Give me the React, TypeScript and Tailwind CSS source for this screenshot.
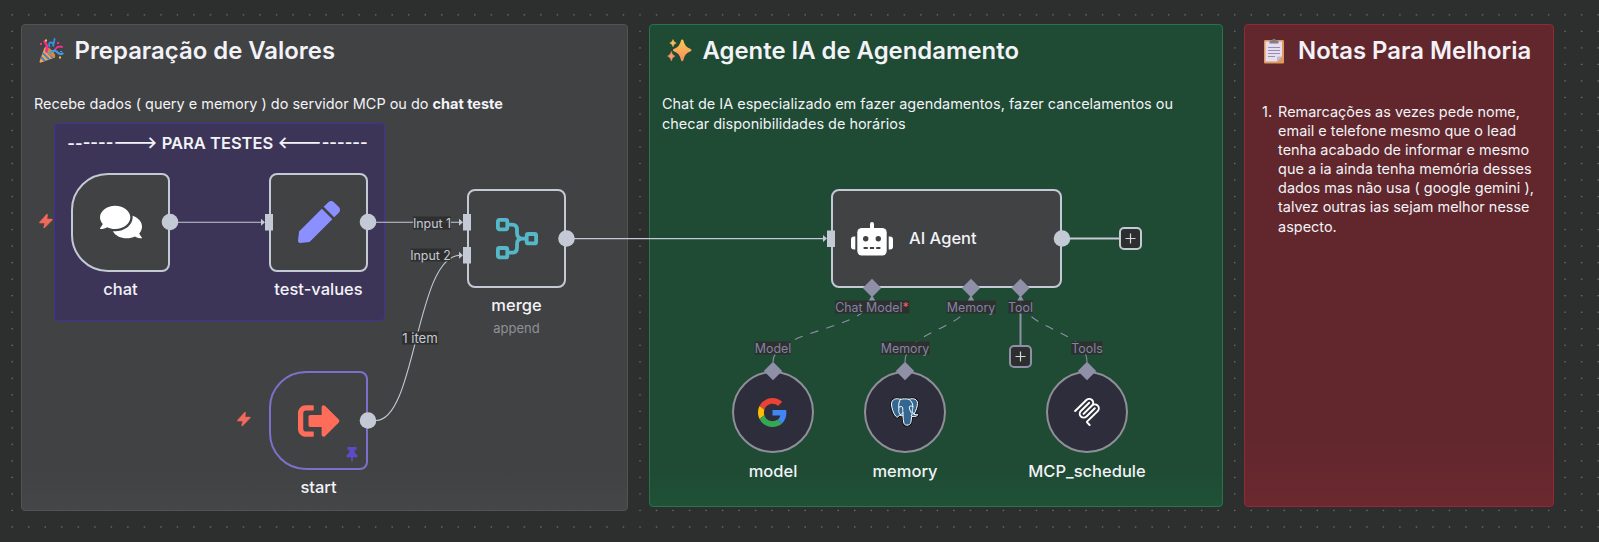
import type { ReactNode } from 'react';
import { FaComments, FaPen, FaSignOutAlt, FaThumbtack } from 'react-icons/fa';

type Tone = 'light' | 'muted';

function Label({ x, y, tone = 'light', children }: { x: number; y: number; tone?: Tone; children: ReactNode }) {
  return (
    <span
      className={`absolute -translate-x-1/2 -translate-y-1/2 whitespace-nowrap bg-[#2d2e2e]/90 text-[12.4px] leading-[13px] ${tone === 'light' ? 'text-[#c3c9d5]' : 'text-[#8683a3]'}`}
      style={{ left: x, top: y }}
    >
      {children}
    </span>
  );
}

/** A canvas node: the outlined box with its name and optional subtitle stacked underneath. */
function Node({ x, y, box, name, subtitle, children }: { x: number; y: number; box: string; name?: string; subtitle?: string; children: ReactNode }) {
  return (
    <div className="absolute flex flex-col items-center whitespace-nowrap" style={{ left: x, top: y }}>
      <div className={`flex items-center border-2 ${box}`}>{children}</div>
      {name && <span className="-mx-8 mt-[7px] text-[16.500px] leading-5 font-medium">{name}</span>}
      {subtitle && <span className="mt-[4px] text-[13px] leading-[18px] text-[#8f9196]">{subtitle}</span>}
    </div>
  );
}

function Bolt({ x, y }: { x: number; y: number }) {
  return (
    <svg className="absolute h-4 w-4" style={{ left: x, top: y }} viewBox="0 0 16 16">
      <path d="M8.7 1.2 1.5 9.2q-.5.8.4.9h4.8l-1 4.3q0 .9.8.5l7.7-7.8q.5-.8-.4-1H9l.6-4.400q0-.9-.9-.5Z" fill="#f0695b" stroke="#f0695b" strokeWidth=".5" strokeLinejoin="round" />
    </svg>
  );
}

function RobotIcon() {
  return (
    <svg className="h-[34px] w-[42px]" viewBox="0 0 42 34" fill="#fff">
      <rect x="19" y="0" width="4" height="9" rx="2" />
      <path d="M4.300 14.500v13H3a3 3 0 0 1-3-3v-7a3 3 0 0 1 3-3ZM37.700 14.500v13H39a3 3 0 0 0 3-3v-7a3 3 0 0 0-3-3Z" />
      <rect x="6.300" y="6" width="29.400" height="27.500" rx="4.500" />
      <g fill="#414244">
        <circle cx="14.700" cy="16.700" r="2.700" />
        <circle cx="27.300" cy="16.700" r="2.700" />
        <path d="M12.600 25h4.200v2h-4.200ZM18.900 25h4.200v2h-4.200ZM25.200 25h4.200v2h-4.200Z" />
      </g>
    </svg>
  );
}

function MergeIcon() {
  return (
    <svg className="h-[42px] w-[42px]" viewBox="0 0 42 42" fill="none" stroke="#54b8c9" strokeWidth="3.8">
      <rect x="1.900" y="1.900" width="9.400" height="9.400" rx="1.500" />
      <rect x="1.900" y="30" width="9.400" height="9.400" rx="1.500" />
      <rect x="30.700" y="16" width="9.400" height="9.400" rx="1.500" />
      <path d="M12.500 6.600h3.500q5 0 5 5v3.500q0 5.500 5.500 5.500h3.500M12.500 34.700h3.500q5 0 5-5v-3.500q0-5.500 5.500-5.500" />
    </svg>
  );
}

function GoogleIcon() {
  return (
    <svg className="mr-px h-[29px] w-[29px]" viewBox="0 0 48 48">
      <path fill="#EA4335" d="M24 9.5c3.54 0 6.71 1.22 9.21 3.6l6.85-6.85C35.9 2.38 30.47 0 24 0 14.62 0 6.51 5.38 2.56 13.22l7.98 6.19C12.43 13.72 17.74 9.5 24 9.5z" />
      <path fill="#4285F4" d="M46.98 24.55c0-1.57-.15-3.09-.38-4.55H24v9.02h12.94c-.58 2.96-2.26 5.48-4.78 7.18l7.73 6c4.51-4.18 7.09-10.36 7.09-17.65z" />
      <path fill="#FBBC05" d="M10.53 28.59c-.48-1.45-.76-2.99-.76-4.59s.27-3.14.76-4.59l-7.98-6.19C.92 16.46 0 20.12 0 24c0 3.88.92 7.54 2.56 10.78l7.97-6.19z" />
      <path fill="#34A853" d="M24 48c6.48 0 11.93-2.13 15.89-5.81l-7.73-6c-2.15 1.45-4.92 2.3-8.16 2.3-6.26 0-11.57-4.22-13.47-9.91l-7.98 6.19C6.51 42.62 14.62 48 24 48z" />
    </svg>
  );
}

const ELEPHANT =
  'M10.500 2.300C6 .8 1.700 2 1.500 7c0 4 2 9.500 4.200 12.200 1 1.200 2.200 1.200 3-.1l1-1.200c1 .8 2 .9 3.300.8.4 2.500.2 5.500.9 7.500.6 1.800 2.500 2.300 4.300 1.800 2-.5 2.700-1.800 2.900-4l.5-4.500c2 .3 4.500.1 6-1.300.4-.6 0-1-.8-.8-1.200.2-2.300.2-3-.1 2.200-3.300 3.600-7.800 3.700-11 0-4-4-5.500-8.500-4-2.800-.6-5.800-.6-8.500 0Z';

function ElephantIcon() {
  return (
    <svg className="h-[30px] w-[30px]" viewBox="0 0 30 30" strokeLinejoin="round" strokeLinecap="round">
      <path d={ELEPHANT} fill="#111" stroke="#111" strokeWidth="2.600" />
      <path d={ELEPHANT} fill="#336791" stroke="#fff" strokeWidth="1" />
      <path
        d="M10.500 2.300C8.800 4.500 8.500 7.500 8.800 10.500c.2 2-.4 3.500.2 5 .3 1 .8 1.800 1.600 2.300M9 10.200c1.500-1 3.500-1 3.700.6.3 2.200-.4 3.200.4 4.700-.6 1.700-2 1.500-3 2.300M13 18.700c-.1-1.200.3-2-.1-3M19 2.300c3 2 4 5 3.900 8 0 1.500-.9 3-.6 4.500.2 1 1 1.600 1.500 2.200M22.800 9.500c-1.500-.8-3.500-.7-3.500.7.2 2.300 1.400 4.800 3 6.800l-1 1.700"
        fill="none"
        stroke="#fff"
        strokeWidth="1"
      />
    </svg>
  );
}

function McpIcon() {
  return (
    <svg className="mr-px h-7 w-7" viewBox="0 0 24 24" fill="#fff">
      <path d="M15.688 2.343a2.588 2.588 0 00-3.61 0l-9.626 9.44a.863.863 0 01-1.203 0 .823.823 0 010-1.18l9.626-9.44a4.313 4.313 0 016.016 0 4.116 4.116 0 011.204 3.54 4.3 4.3 0 013.609 1.18l.05.05a4.115 4.115 0 010 5.9l-8.706 8.537a.274.274 0 000 .393l1.788 1.754a.823.823 0 010 1.18.863.863 0 01-1.203 0l-1.788-1.753a1.92 1.92 0 010-2.754l8.706-8.538a2.47 2.47 0 000-3.54l-.05-.049a2.588 2.588 0 00-3.607-.003l-7.172 7.034-.002.002-.098.097a.863.863 0 01-1.204 0 .823.823 0 010-1.18l7.273-7.133a2.47 2.47 0 00-.003-3.537z" />
      <path d="M14.485 4.703a.823.823 0 000-1.18.863.863 0 00-1.204 0l-7.119 6.982a4.115 4.115 0 000 5.9 4.314 4.314 0 006.016 0l7.12-6.982a.823.823 0 000-1.18.863.863 0 00-1.204 0l-7.119 6.982a2.588 2.588 0 01-3.61 0 2.47 2.47 0 010-3.54l7.12-6.982z" />
    </svg>
  );
}

function Plus({ x, y, className }: { x: number; y: number; className: string }) {
  return (
    <div className={`absolute flex h-[23px] w-[23px] items-center justify-center rounded-[5px] border-2 bg-[#2d2e2e] ${className}`} style={{ left: x, top: y }}>
      <svg className="h-[11px] w-[11px]" viewBox="0 0 11 11" stroke="#d6d7de" strokeWidth="1.200">
        <path d="M5.500 .5v10M.5 5.500h10" />
      </svg>
    </div>
  );
}

function PartyIcon() {
  return (
    <svg className="h-[26px] w-[26px]" viewBox="0 0 26 26" fill="none">
      <path d="M6.500 9.500 1.500 23.500q0 1.500 1.500 1L17 19.500Q16 11 6.500 9.500Z" fill="#f3a545" />
      <path d="m4.600 14.800 6.800 6.900M3 19l4 4.200M7.200 11.500l7.800 8.500" stroke="#3f7fd6" strokeWidth="1.900" />
      <ellipse cx="12" cy="14" rx="2.600" ry="7" transform="rotate(-45 12 14)" fill="#d98836" />
      <path d="M8.500 13.500Q10.500 8 6.500 3.500" stroke="#f0308c" strokeWidth="2.500" strokeLinecap="round" />
      <path d="M17 11.500q3-4 7-2.500" stroke="#f0308c" strokeWidth="2" strokeLinecap="round" />
      <path d="M12 15q4-4 7-1t5.500 1.500" stroke="#3aa0ee" strokeWidth="2.200" strokeLinecap="round" />
      <path d="M11.500 8.500q-1.500-4 1.500-4t2 4q1-3 1.500-7.500" stroke="#2f95e0" strokeWidth="1.800" strokeLinecap="round" />
      <path d="M7 1.500h2v2H7ZM21 18.500h2v2h-2Z" fill="#f8c04c" />
      <path d="M2 5h2v2H2ZM19 4h2v2h-2Z" fill="#f0308c" />
      <path d="M22 13h2v1h-2Z" fill="#3aa0ee" />
    </svg>
  );
}

function SparklesIcon() {
  return (
    <svg className="h-[26px] w-[26px]" viewBox="0 0 26 26">
      <defs>
        <linearGradient id="spark" x1="0" y1="0" x2="0" y2="1">
          <stop offset="0" stopColor="#fbc94f" />
          <stop offset="1" stopColor="#f98a5f" />
        </linearGradient>
      </defs>
      <path fill="url(#spark)" d="M16.200 1.500q.9 0 1.200 1.100 1.200 6.300 6.800 8.200 1.400.6 1.400 1.300t-1.400 1.300q-5.600 1.900-6.800 8.700-.3 1.200-1.200 1.200T15 22.100q-1.200-6.800-6.800-8.700-1.400-.6-1.400-1.300t1.400-1.300Q13.800 8.900 15 2.600q.3-1.100 1.200-1.100Z" />
      <path fill="#fbb95c" d="M7 1.500q.7 2.700 3.200 3.500Q7.700 5.800 7 8.700 6.300 5.800 3.800 5 6.300 4.200 7 1.500Z" stroke="#fbb95c" strokeWidth=".5" />
      <path fill="#fa9a6b" d="M5.300 13.500q.8 3.800 3.700 4.600-2.900.9-3.700 4.800-.8-3.900-3.700-4.800 2.900-.8 3.700-4.600Z" stroke="#fa9a6b" strokeWidth=".5" />
    </svg>
  );
}

function ClipboardIcon() {
  return (
    <svg className="h-[26px] w-[22px]" viewBox="0 0 22 26">
      <rect x="1" y="2" width="20" height="23.500" rx="1.200" fill="#dd9b60" />
      <path d="M2.500 3.500h16.500v15l-5 5H2.500Z" fill="#e6def0" />
      <path d="M14 23.500v-4q0-1 1-1h4Z" fill="#c4b5d6" />
      <path d="M6.500 5.500v-2q0-1 1-1h1.500Q9.300.8 11 .8t2 1.700h1.500q1 0 1 1v2Z" fill="#837c8b" />
      <path d="M5 9.500h12M5 12.500h12M5 15.500h12M5 18.500h7" stroke="#8f84a6" strokeWidth=".9" />
    </svg>
  );
}

const dots = Array.from({ length: 33 }, (_, r) => Array.from({ length: 97 }, (_, c) => [12.3 + c * 16.52, 14.9 + r * 16.52])).flat();

const circles = [[170, 222], [368, 222], [566.5, 238.5], [368, 420.5], [1062, 238.5]];
const squares = [[265, 214], [463, 214], [463, 247], [827, 230.5]];
const diamonds = [[872, 288], [971, 288], [1020.5, 288], [773, 371], [905, 371], [1087, 371]];

const main = 'h-[99px] w-[99px] justify-center rounded-[8px] border-[#c3c9d5] bg-[#414244]';
const trigger = 'h-[99px] w-[99px] justify-center rounded-[8px] rounded-l-[37px] bg-[#414244]';
const sub = 'mb-px h-[82px] w-[82px] justify-center rounded-full border-[#8f8f98] bg-[#2d2d3b]';

export default function App() {
  return (
    <main className="relative h-[542px] w-[1599px] overflow-hidden bg-[#2d2e2e] font-['Inter',sans-serif] text-[#f2f2f7]">
      <svg className="absolute inset-0 h-full w-full" fill="#6a6b6b">
        {dots.map(([x, y], i) => (
          <rect key={i} x={x - 0.8} y={y - 0.7} width="1.500" height="1.300" />
        ))}
      </svg>

      <div className="relative flex items-start gap-[21px] pt-6 pl-[21px]">
        <section className="h-[487px] w-[607px] shrink-0 rounded border border-[#515254] bg-linear-to-t from-[#454648] to-[#414244] to-8% px-3 pt-[11px]">
          <h1 className="flex h-[30px] items-center gap-[10.500px] pl-[4px] text-[23.900px] font-semibold"><PartyIcon />Preparação de Valores</h1>
          <p className="mt-[28px] text-[14.46px] leading-5">Recebe dados ( query e memory ) do servidor MCP ou do <b>chat teste</b></p>
          <div className="mt-[9px] ml-5 h-[198px] w-[331px] rounded border border-[#4330a0] bg-[#3c3558] pt-2 pr-[4px] text-center text-[16.500px] leading-[22px] font-semibold whitespace-nowrap">
            {'---------> PARA TESTES <---------'}
          </div>
        </section>
        <section className="h-[483px] w-[574px] shrink-0 rounded border border-[#24754d] bg-linear-to-t from-[#1f5237] to-[#1f4a33] to-8% px-3 pt-[11px]">
          <h1 className="flex h-[30px] items-center gap-[10.500px] pl-[4px] text-[23.900px] font-semibold"><SparklesIcon />Agente IA de Agendamento</h1>
          <p className="mt-[28px] text-[14.46px] leading-5">Chat de IA especializado em fazer agendamentos, fazer cancelamentos ou<br />checar disponibilidades de horários</p>
        </section>
        <section className="h-[483px] w-[310px] shrink-0 rounded border border-[#8f2a36] bg-linear-to-t from-[#6b282f] to-[#61272c] to-15% px-3 pt-[11px]">
          <h1 className="flex h-[30px] items-center gap-[13px] pl-[6px] text-[23.900px] font-semibold whitespace-nowrap"><ClipboardIcon />Notas Para Melhoria</h1>
          <div className="mt-9 flex gap-[6px] pl-[5px] text-[14.46px] leading-[19.1px] whitespace-nowrap">
            <span>1.</span>
            <p>Remarcações as vezes pede nome,<br />email e telefone mesmo que o lead<br />tenha acabado de informar e mesmo<br />que a ia ainda tenha memória desses<br />dados mas não usa ( google gemini ),<br />talvez outras ias sejam melhor nesse<br />aspecto.</p>
          </div>
        </section>
      </div>

      <svg className="absolute inset-0 h-full w-full" fill="none" stroke="#c3c9d5" strokeWidth="1.100">
        <path d="M178 222.300H262M376 222.300H460M376 420.500C416 420.500 416 255.200 460 255.200M574 238.600H824" />
        <path d="M1070 238.500H1119" strokeWidth="2" />
        <g fill="#c3c9d5" stroke="none">
          <path d="M261 218.800v7l4-3.500ZM459 218.800v7l4-3.500ZM459 251.700v7l4-3.500ZM823 235.100v7l4-3.500Z" />
        </g>
        <g stroke="#8f8fa8" strokeDasharray="8.300 8.300">
          <path d="M773 362C773 329.500 872 329.500 872 297M905 362C905 329.500 971 329.500 971 297M1087 362C1087 329.500 1020.500 329.500 1020.500 297" />
        </g>
        <path d="M1020.500 297V346" stroke="#8f8fa8" strokeWidth="2" />
        <path d="M868.500 301h7l-3.500-6ZM967.500 301h7l-3.500-6ZM1017 301h7l-3.500-6Z" fill="#8f8fa8" stroke="none" />
      </svg>

      <Node x={71} y={172.5} box={`${trigger} border-[#c3c9d5]`} name="chat"><FaComments className="h-[38px] w-[42px] text-white" /></Node>
      <Node x={269} y={172.5} box={main} name="test-values"><FaPen className="h-[42px] w-[42px] text-[#8c8fff]" /></Node>
      <Node x={467} y={189} box={main} name="merge" subtitle="append"><MergeIcon /></Node>
      <Node x={269} y={371} box={`${trigger} border-[#7d6fcb]`} name="start"><FaSignOutAlt className="h-[42px] w-[42px] text-[#ff6d5a]" /></Node>
      <FaThumbtack className="absolute top-[447px] left-[346px] h-[15px] w-3 text-[#5b4bc4]" />
      <Node x={831} y={189} box="h-[99px] w-[231px] gap-4 rounded-[8px] border-[#c3c9d5] bg-[#414244] pl-[18px]">
        <RobotIcon />
        <span className="text-[16.500px] font-medium">AI Agent</span>
      </Node>
      <Node x={732} y={371} box={sub} name="model"><GoogleIcon /></Node>
      <Node x={864} y={371} box={sub} name="memory"><ElephantIcon /></Node>
      <Node x={1046} y={371} box={sub} name="MCP_schedule"><McpIcon /></Node>

      <svg className="absolute inset-0 h-full w-full" fill="#c3c9d5">
        {circles.map(([x, y]) => <circle key={`${x}-${y}`} cx={x} cy={y} r="8.300" />)}
        {squares.map(([x, y]) => <rect key={`${x}-${y}`} x={x} y={y} width="8" height="16.500" />)}
        {diamonds.map(([x, y]) => <path key={`${x}-${y}`} d={`M${x} ${y - 9.2}l9.200 9.200-9.200 9.200-9.200-9.200Z`} fill="#8f8fa8" />)}
      </svg>

      <Plus x={1119} y={227} className="border-[#c3c9d5]" />
      <Plus x={1009} y={345} className="border-[#8f8fa8]" />
      <Bolt x={38} y={213} />
      <Bolt x={236} y={411} />

      <Label x={432} y={222.5}>Input 1</Label>
      <Label x={430.5} y={255}>Input 2</Label>
      <Label x={420} y={338}><span className="text-[13.200px]">1 item</span></Label>
      <Label x={872} y={307} tone="muted">Chat Model<span className="text-[#ff5c66]">*</span></Label>
      <Label x={971} y={307} tone="muted">Memory</Label>
      <Label x={1020.5} y={306.5} tone="muted">Tool</Label>
      <Label x={773} y={348} tone="muted">Model</Label>
      <Label x={905} y={348} tone="muted">Memory</Label>
      <Label x={1087} y={348} tone="muted">Tools</Label>
    </main>
  );
}
